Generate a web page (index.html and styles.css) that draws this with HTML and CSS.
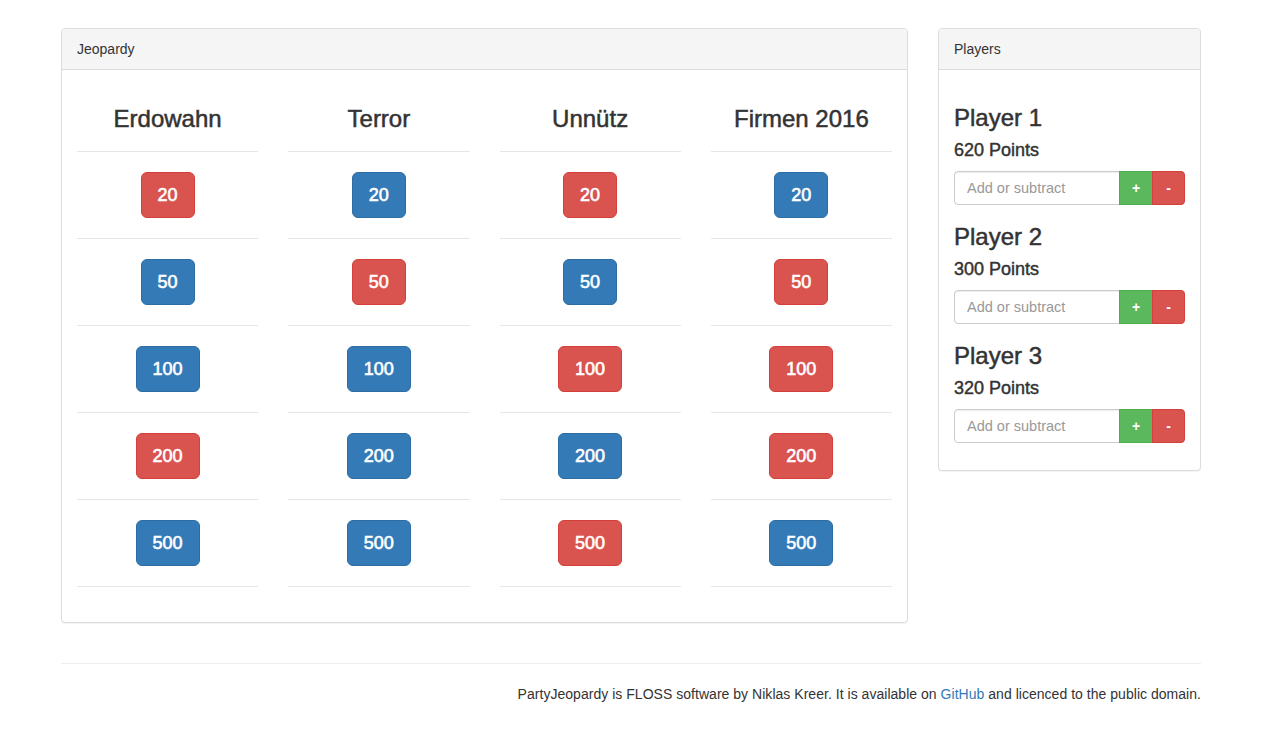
FILE: index.html
```html
<!DOCTYPE html>
<html>
<head>
<meta charset="utf-8">
<title>PartyJeopardy</title>
<link rel="stylesheet" href="styles.css">
</head>
<body>
<div class="page">
  <div class="main-row">
    <div class="panel board-panel">
      <div class="panel-heading">Jeopardy</div>
      <div class="panel-body board">
        <div class="category">
          <h3 class="cat-title">Erdowahn</h3>
          <div class="cell"><button class="btn red">20</button></div>
          <div class="cell"><button class="btn blue">50</button></div>
          <div class="cell"><button class="btn blue">100</button></div>
          <div class="cell"><button class="btn red">200</button></div>
          <div class="cell"><button class="btn blue">500</button></div>
        </div>
        <div class="category">
          <h3 class="cat-title">Terror</h3>
          <div class="cell"><button class="btn blue">20</button></div>
          <div class="cell"><button class="btn red">50</button></div>
          <div class="cell"><button class="btn blue">100</button></div>
          <div class="cell"><button class="btn blue">200</button></div>
          <div class="cell"><button class="btn blue">500</button></div>
        </div>
        <div class="category">
          <h3 class="cat-title">Unnütz</h3>
          <div class="cell"><button class="btn red">20</button></div>
          <div class="cell"><button class="btn blue">50</button></div>
          <div class="cell"><button class="btn red">100</button></div>
          <div class="cell"><button class="btn blue">200</button></div>
          <div class="cell"><button class="btn red">500</button></div>
        </div>
        <div class="category">
          <h3 class="cat-title">Firmen 2016</h3>
          <div class="cell"><button class="btn blue">20</button></div>
          <div class="cell"><button class="btn red">50</button></div>
          <div class="cell"><button class="btn red">100</button></div>
          <div class="cell"><button class="btn red">200</button></div>
          <div class="cell"><button class="btn blue">500</button></div>
        </div>
      </div>
    </div>
    <div class="panel players-panel">
      <div class="panel-heading">Players</div>
      <div class="panel-body players">
        <div class="player">
          <h3 class="player-name">Player 1</h3>
          <h4 class="player-points">620 Points</h4>
          <div class="input-group">
            <input class="form-control" type="text" placeholder="Add or subtract">
            <button class="small-btn green">+</button>
            <button class="small-btn red last">-</button>
          </div>
        </div>
        <div class="player">
          <h3 class="player-name">Player 2</h3>
          <h4 class="player-points">300 Points</h4>
          <div class="input-group">
            <input class="form-control" type="text" placeholder="Add or subtract">
            <button class="small-btn green">+</button>
            <button class="small-btn red last">-</button>
          </div>
        </div>
        <div class="player">
          <h3 class="player-name">Player 3</h3>
          <h4 class="player-points">320 Points</h4>
          <div class="input-group">
            <input class="form-control" type="text" placeholder="Add or subtract">
            <button class="small-btn green">+</button>
            <button class="small-btn red last">-</button>
          </div>
        </div>
      </div>
    </div>
  </div>
  <footer class="footer">
    <p>PartyJeopardy is FLOSS software by Niklas Kreer. It is available on <a href="#">GitHub</a> and licenced to the public domain.</p>
  </footer>
</div>
</body>
</html>
```

FILE: styles.css
```css
* { box-sizing: border-box; }
html, body {
  margin: 0;
  padding: 0;
  background: #fff;
}
body {
  font-family: "Liberation Sans", Arial, Helvetica, sans-serif;
  font-size: 14px;
  line-height: 20px;
  color: #333;
}
.page {
  width: 1140px;
  margin-left: 61px;
  padding-top: 28px;
}
.main-row {
  display: flex;
  align-items: flex-start;
  gap: 30px;
}
.panel {
  border: 1px solid #ddd;
  border-radius: 4px;
  background: #fff;
  box-shadow: 0 1px 1px rgba(0,0,0,0.05);
}
.board-panel { width: 847px; }
.players-panel { width: 263px; }
.panel-heading {
  background: #f5f5f5;
  border-bottom: 1px solid #ddd;
  border-radius: 3px 3px 0 0;
  padding: 10px 15px;
  height: 41px;
  font-size: 14px;
  line-height: 20px;
  color: #333;
}
.board {
  display: grid;
  grid-template-columns: repeat(4, 1fr);
  padding: 15px 0;
}
.category {
  padding: 0 15px;
  margin-bottom: 20px;
}
.cat-title {
  margin: 0;
  padding: 21px 0 19px;
  height: 67px;
  font-size: 24px;
  line-height: 26px;
  font-weight: normal;
  -webkit-text-stroke: 0.5px #333;
  text-align: center;
  color: #333;
  border-bottom: 1px solid #e6e6e6;
}
.cell {
  height: 87px;
  padding: 20px 0;
  border-bottom: 1px solid #e6e6e6;
  display: flex;
  justify-content: center;
}
.btn {
  font-family: "Liberation Sans", Arial, sans-serif;
  font-size: 18px;
  line-height: 24px;
  padding: 10px 16px;
  height: 46px;
  border-radius: 6px;
  border: 1px solid transparent;
  color: #fff;
  font-weight: normal;
  -webkit-text-stroke: 0.6px #fff;
  cursor: pointer;
}
.btn.red { background: #d9534f; border-color: #d43f3a; }
.btn.blue { background: #337ab7; border-color: #2e6da4; }
.players {
  padding: 16px 15px 27px;
}
.player-name {
  margin: 19px 0 10px;
  font-size: 24px;
  line-height: 26px;
  font-weight: normal;
  -webkit-text-stroke: 0.5px #333;
  color: #333;
}
.player-points {
  margin: 0 0 11px;
  font-size: 18px;
  line-height: 19px;
  font-weight: normal;
  -webkit-text-stroke: 0.45px #333;
  color: #333;
}
.input-group {
  display: flex;
  height: 34px;
}
.form-control {
  flex: 1;
  min-width: 0;
  height: 34px;
  padding: 6px 12px;
  font-family: "Liberation Sans", Arial, sans-serif;
  font-size: 14.5px;
  color: #555;
  border: 1px solid #ccc;
  border-radius: 4px 0 0 4px;
  box-shadow: inset 0 1px 1px rgba(0,0,0,0.075);
  outline: none;
}
.form-control::placeholder { color: #999; }
.small-btn {
  height: 34px;
  border: 1px solid transparent;
  color: #fff;
  font-family: "Liberation Sans", Arial, sans-serif;
  font-size: 14px;
  font-weight: bold;
  padding: 6px 0;
  margin-left: -1px;
  text-align: center;
  cursor: pointer;
}
.small-btn.green { background: #5cb85c; border-color: #4cae4c; width: 34px; }
.small-btn.red { background: #d9534f; border-color: #d43f3a; width: 33px; }
.small-btn.last { border-radius: 0 4px 4px 0; }
.footer {
  margin-top: 40px;
  border-top: 1px solid #eee;
  padding-top: 20px;
  text-align: right;
}
.footer p { margin: 0 0 10px; letter-spacing: 0.03px; }
.footer a { color: #337ab7; text-decoration: none; }
```
